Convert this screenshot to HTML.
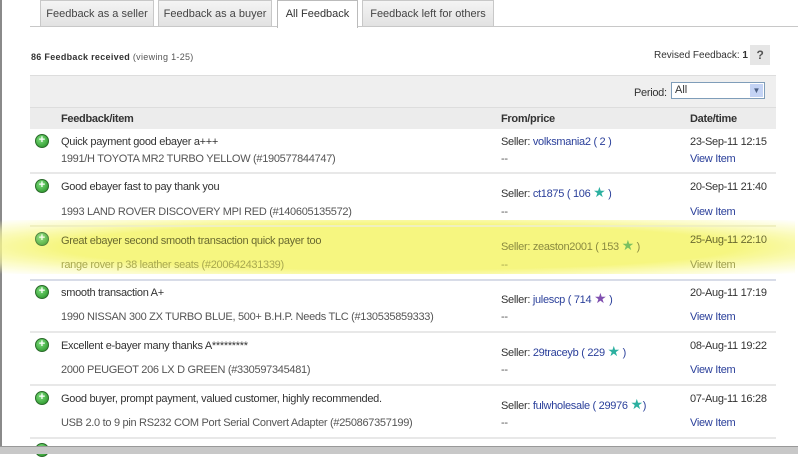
<!DOCTYPE html>
<html><head><style>
body{margin:0;width:798px;height:453px;overflow:hidden;background:#fff;font-family:"Liberation Sans",Arial,sans-serif;font-size:11px;color:#333;position:relative}
.a{position:absolute;white-space:nowrap;letter-spacing:-0.3px}
.tab{position:absolute;top:0;height:26px;border:1px solid #c8c8c8;border-bottom:none;background:linear-gradient(#f4f4f4,#e2e2e2);font-size:11px;color:#444;text-align:center;line-height:27px;box-sizing:border-box}
.lnk{color:#2a3f9a}
.sep{position:absolute;left:30px;width:746px;height:2px;background:#e8e8e8}
.ic{position:absolute;width:12px;height:12px;border-radius:50%;background:radial-gradient(circle at 40% 35%,#7fe07f,#1d8a1d);border:1px solid #2a6a2a;color:#fff;font-size:11px;line-height:11px;text-align:center;font-weight:bold}
.gr{color:#555}
.star{font-size:14px;color:#2cb0a0}
</style></head><body>
<div style="position:absolute;left:0;top:0;width:2px;height:446px;background:#8a8a8a"></div>
<div style="position:absolute;left:30px;top:26px;width:768px;height:1px;background:#c8c8c8"></div>
<div class="tab" style="left:40px;width:114px">Feedback as a seller</div>
<div class="tab" style="left:158px;width:114px">Feedback as a buyer</div>
<div class="tab" style="left:277px;width:81px;background:#fff;height:28px;color:#333;border-color:#bbb">All Feedback</div>
<div class="tab" style="left:362px;width:132px">Feedback left for others</div>
<div class="a" style="left:31px;top:52px;font-size:9px;color:#333;letter-spacing:0.3px"><b>86 Feedback received</b> <span style="color:#555">(viewing 1-25)</span></div>
<div class="a" style="left:654px;top:50px;font-size:10px;color:#333;letter-spacing:0">Revised Feedback: <b>1</b></div>
<div class="a" style="left:750px;top:45px;width:20px;height:20px;background:#e6e6e6;text-align:center;line-height:20px;font-weight:bold;color:#555;font-size:12px">?</div>
<div style="position:absolute;left:30px;top:75px;width:746px;height:34px;background:#efefef;border-top:1px solid #ddd"></div>
<div style="position:absolute;left:30px;top:107px;width:746px;height:21px;background:#ececec;border-top:1px solid #ddd"></div>
<div class="a" style="left:634px;top:87px;font-size:11px">Period:</div>
<div style="position:absolute;left:671px;top:82px;width:94px;height:17px;border:1px solid #7f9db9;background:#fff;box-sizing:border-box"><span style="position:absolute;left:3px;top:1px;font-size:11px">All</span><span style="position:absolute;right:1px;top:1px;width:13px;height:13px;background:#c4d3f4;color:#4d6185;font-size:8px;text-align:center;line-height:13px">▼</span></div>
<div class="a" style="left:61px;top:113px;font-weight:bold;font-size:11px">Feedback/item</div>
<div class="a" style="left:501px;top:113px;font-weight:bold">From/price</div>
<div class="a" style="left:690px;top:113px;font-weight:bold">Date/time</div>

<div style="position:absolute;left:0;top:220px;width:795px;height:54px;background:radial-gradient(ellipse at center,#f6f680 60%,rgba(250,250,170,0.6) 82%,rgba(255,255,255,0) 100%)"></div>

<div class="sep" style="top:172px"></div>
<div class="sep" style="top:225px;background:#f0f0c0"></div>
<div class="sep" style="top:279px;background:#d8dce8"></div>
<div class="sep" style="top:331px"></div>
<div class="sep" style="top:384px"></div>
<div class="sep" style="top:437px"></div>

<div class="ic" style="left:35px;top:134px">+</div>
<div class="a" style="left:61px;top:136px">Quick payment good ebayer a+++</div>
<div class="a gr" style="left:61px;top:153px">1991/H TOYOTA MR2 TURBO YELLOW (#190577844747)</div>
<div class="a" style="left:501px;top:136px">Seller: <span class="lnk">volksmania2 ( 2 )</span></div>
<div class="a gr" style="left:501px;top:153px">--</div>
<div class="a" style="left:690px;top:136px">23-Sep-11 12:15</div>
<div class="a lnk" style="left:690px;top:153px">View Item</div>

<div class="ic" style="left:35px;top:179px">+</div>
<div class="a" style="left:61px;top:181px">Good ebayer fast to pay thank you</div>
<div class="a gr" style="left:61px;top:206px">1993 LAND ROVER DISCOVERY MPI RED (#140605135572)</div>
<div class="a" style="left:501px;top:184px">Seller: <span class="lnk">ct1875 ( 106 <span class="star">★</span> )</span></div>
<div class="a gr" style="left:501px;top:206px">--</div>
<div class="a" style="left:690px;top:181px">20-Sep-11 21:40</div>
<div class="a lnk" style="left:690px;top:206px">View Item</div>

<div class="ic" style="left:35px;top:232px;opacity:.8">+</div>
<div class="a" style="left:61px;top:235px;color:#6a6a30">Great ebayer second smooth transaction quick payer too</div>
<div class="a" style="left:61px;top:259px;color:#a8a850">range rover p 38 leather seats (#200642431339)</div>
<div class="a" style="left:501px;top:237px;color:#8a8a40">Seller: zeaston2001 ( 153 <span class="star" style="color:#7ac060">★</span> )</div>
<div class="a" style="left:501px;top:259px;color:#a8a850">--</div>
<div class="a" style="left:690px;top:234px;color:#6a6a30">25-Aug-11 22:10</div>
<div class="a" style="left:690px;top:259px;color:#a0a050">View Item</div>

<div class="ic" style="left:35px;top:285px">+</div>
<div class="a" style="left:61px;top:287px">smooth transaction A+</div>
<div class="a gr" style="left:61px;top:311px">1990 NISSAN 300 ZX TURBO BLUE, 500+ B.H.P. Needs TLC (#130535859333)</div>
<div class="a" style="left:501px;top:290px">Seller: <span class="lnk">julescp ( 714 <span class="star" style="color:#8050b0">★</span> )</span></div>
<div class="a gr" style="left:501px;top:311px">--</div>
<div class="a" style="left:690px;top:287px">20-Aug-11 17:19</div>
<div class="a lnk" style="left:690px;top:311px">View Item</div>

<div class="ic" style="left:35px;top:338px">+</div>
<div class="a" style="left:61px;top:340px">Excellent e-bayer many thanks A*********</div>
<div class="a gr" style="left:61px;top:364px">2000 PEUGEOT 206 LX D GREEN (#330597345481)</div>
<div class="a" style="left:501px;top:343px">Seller: <span class="lnk">29traceyb ( 229 <span class="star">★</span> )</span></div>
<div class="a gr" style="left:501px;top:364px">--</div>
<div class="a" style="left:690px;top:340px">08-Aug-11 19:22</div>
<div class="a lnk" style="left:690px;top:364px">View Item</div>

<div class="ic" style="left:35px;top:391px">+</div>
<div class="a" style="left:61px;top:393px">Good buyer, prompt payment, valued customer, highly recommended.</div>
<div class="a gr" style="left:61px;top:417px">USB 2.0 to 9 pin RS232 COM Port Serial Convert Adapter (#250867357199)</div>
<div class="a" style="left:501px;top:396px">Seller: <span class="lnk">fulwholesale ( 29976 <span class="star">★</span>)</span></div>
<div class="a gr" style="left:501px;top:417px">--</div>
<div class="a" style="left:690px;top:393px">07-Aug-11 16:28</div>
<div class="a lnk" style="left:690px;top:417px">View Item</div>

<div class="ic" style="left:35px;top:443px"></div>
<div style="position:absolute;left:0;top:446px;width:798px;height:7px;background:#c8c8c8;border-top:1px solid #999"></div>
</body></html>
